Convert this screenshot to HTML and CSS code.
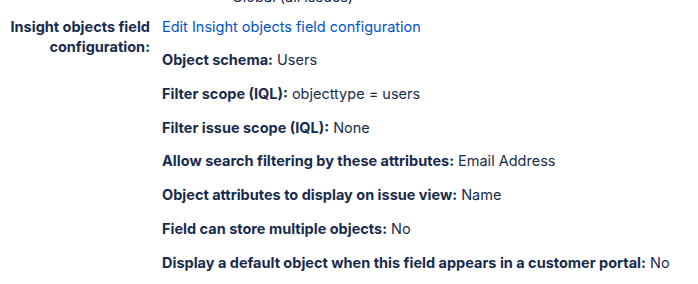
FILE: index.html
```html
<!DOCTYPE html>
<html lang="en">
<head>
<meta charset="utf-8">
<title>Insight objects field configuration</title>
<link rel="stylesheet" href="styles.css">
</head>
<body>
<div class="page">
  <div class="field field-prev">
    <div class="label"></div>
    <div class="values">
      <p class="item indent">Global (all issues)</p>
    </div>
  </div>
  <div class="field">
    <div class="label">Insight objects field configuration:</div>
    <div class="values">
      <p class="item"><a class="link" href="#">Edit Insight objects field configuration</a></p>
      <p class="item"><strong>Object schema:</strong> Users</p>
      <p class="item"><strong>Filter scope (IQL):</strong> objecttype = users</p>
      <p class="item"><strong>Filter issue scope (IQL):</strong> None</p>
      <p class="item"><strong>Allow search filtering by these attributes:</strong> Email Address</p>
      <p class="item"><strong>Object attributes to display on issue view:</strong> Name</p>
      <p class="item"><strong>Field can store multiple objects:</strong> No</p>
      <p class="item"><strong>Display a default object when this field appears in a customer portal:</strong> No</p>
    </div>
  </div>
</div>
</body>
</html>
```
FILE: styles.css
```css
html, body {
  margin: 0;
  padding: 0;
  background: #ffffff;
}
body {
  font-family: Inter, "Noto Sans", "Liberation Sans", sans-serif;
  font-size: 14.5px;
  line-height: 20px;
  color: #172b4d;
}
.page {
  margin-top: -13px;
}
.field {
  display: grid;
  grid-template-columns: 150px 1fr;
  column-gap: 12px;
}
.field-prev {
  margin-bottom: 9.7px;
}
.label {
  text-align: right;
  font-weight: 700;
  color: #172b4d;
}
.values {
  display: flex;
  flex-direction: column;
  gap: 13.7px;
}
.item {
  margin: 0;
  white-space: nowrap;
}
.item strong {
  font-weight: 700;
}
.indent {
  padding-left: 70px;
}
.link {
  color: #0052cc;
  text-decoration: none;
}
```
